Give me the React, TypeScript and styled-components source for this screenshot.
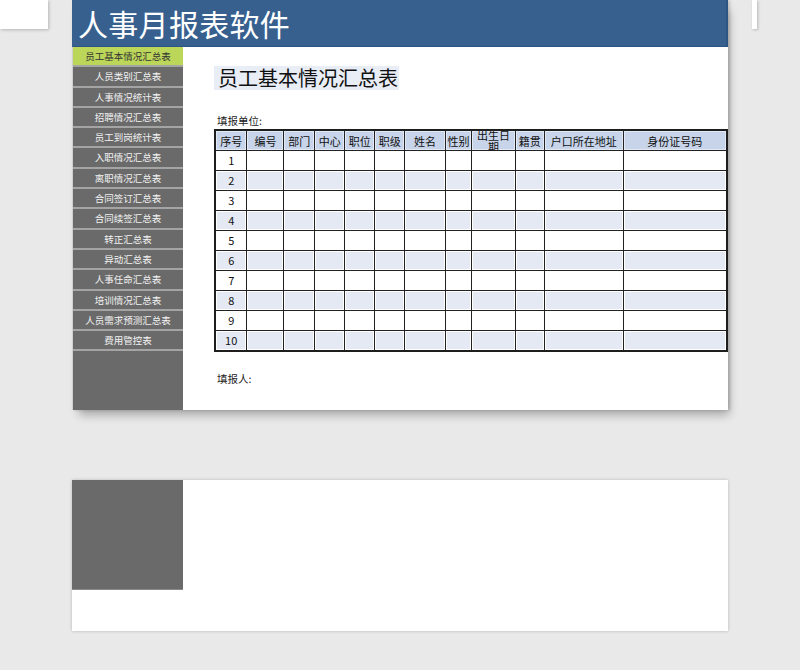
import React from 'react';
import styled, { createGlobalStyle } from 'styled-components';

const GlobalStyle = createGlobalStyle`
    html, body {
        margin: 0;
        padding: 0;
        background: #e9e9e9;
        font-family: 'Noto Sans CJK SC', 'Noto Sans', sans-serif;
    }
`;

const menuItems = [
    '员工基本情况汇总表',
    '人员类别汇总表',
    '人事情况统计表',
    '招聘情况汇总表',
    '员工到岗统计表',
    '入职情况汇总表',
    '离职情况汇总表',
    '合同签订汇总表',
    '合同续签汇总表',
    '转正汇总表',
    '异动汇总表',
    '人事任命汇总表',
    '培训情况汇总表',
    '人员需求预测汇总表',
    '费用管控表',
];

// widths taken from the sheet's column grid
const columns = [
    { label: '序号', width: 32 },
    { label: '编号', width: 37 },
    { label: '部门', width: 31 },
    { label: '中心', width: 30 },
    { label: '职位', width: 30 },
    { label: '职级', width: 30 },
    { label: '姓名', width: 41 },
    { label: '性别', width: 26 },
    { label: '出生日期', width: 44, wrap: true },
    { label: '籍贯', width: 29 },
    { label: '户口所在地址', width: 79 },
    { label: '身份证号码', width: 104 },
];

const Stage = styled.div`
    width: 800px;
    height: 670px;
    overflow: hidden;
`;

const SheetRow = styled.div`
    display: flex;
    align-items: flex-start;
    gap: 24px;
`;

const Stub = styled.div<{ $w: number }>`
    width: ${(p) => p.$w}px;
    height: 29px;
    background: #fff;
    box-shadow: 1px 1px 3px rgba(0, 0, 0, 0.22);
`;

const MainSheet = styled.div`
    width: 656px;
    height: 410px;
    background: #fff;
    display: flex;
    flex-direction: column;
    box-shadow: 2px 0 3px rgba(0, 0, 0, 0.18), 4px 8px 9px -3px rgba(0, 0, 0, 0.28);
`;

const TitleBar = styled.div`
    box-sizing: border-box;
    height: 47px;
    background: #37608f;
    border-bottom: 1px solid #2c5485;
    border-right: 2px solid #2c5485;
    padding: 2px 0 0 6px;
    color: #fff;
    font-size: 30px;
    line-height: 42px;
    letter-spacing: 0.3px;
`;

const Body = styled.div`
    flex: 1;
    display: flex;
    min-height: 0;
`;

const Sidebar = styled.div`
    width: 111px;
    background: #6a6a6a;
    display: flex;
    flex-direction: column;
    border-left: 1px solid #cfcfcf;
    box-sizing: border-box;
`;

const MenuItem = styled.div<{ $active?: boolean }>`
    height: 18.3px;
    flex-shrink: 0;
    border-bottom: 2px solid #a4a4a4;
    background: ${(p) => (p.$active ? '#bcd65a' : '#6a6a6a')};
    color: ${(p) => (p.$active ? '#333' : '#f2f2f2')};
    font-size: 9.5px;
    line-height: 19px;
    text-align: center;
    white-space: nowrap;
`;

const Content = styled.div`
    flex: 1;
    padding: 19px 0 0 31px;
    display: flex;
    flex-direction: column;
    align-items: flex-start;
`;

const SheetTitle = styled.div`
    background: #e9edf5;
    font-size: 20px;
    line-height: 24px;
    height: 24px;
    padding: 0 1px 0 4px;
    color: #111;
`;

const Label = styled.div<{ $top: number }>`
    margin-top: ${(p) => p.$top}px;
    margin-left: 3px;
    font-size: 10.5px;
    line-height: 13px;
    color: #222;
`;

const Grid = styled.table`
    margin-top: 2px;
    border-collapse: collapse;
    border: 2px solid #1e1e1e;
    table-layout: fixed;
`;

const HeadCell = styled.th`
    padding: 0;
    height: 19px;
    border: 1px solid #222;
    background: #c7d4ea;
    box-shadow: inset 0 0 0 1px #e3e9f4;
    font-weight: normal;
    font-size: 11px;
    color: #111;
`;

const HeadInner = styled.div<{ $wrap?: boolean }>`
    height: 19px;
    padding: 0 ${(p) => (p.$wrap ? 4 : 0)}px;
    overflow: hidden;
    display: flex;
    align-items: center;
    justify-content: center;
    line-height: 12px;
    text-align: center;
    white-space: ${(p) => (p.$wrap ? 'normal' : 'nowrap')};
`;

const Cell = styled.td<{ $shade: boolean }>`
    padding: 0;
    height: 19px;
    border: 1px solid #222;
    background: ${(p) => (p.$shade ? '#e4e9f4' : '#fff')};
    box-shadow: inset 0 0 0 1px #fff;
    font-size: 11px;
    text-align: center;
    color: #111;
    line-height: 19px;
`;

const LowerSheet = styled.div`
    margin: 70px 0 0 72px;
    width: 656px;
    height: 151px;
    background: #fff;
    box-shadow: 0 0 3px rgba(0, 0, 0, 0.22);
`;

const LowerSide = styled.div`
    width: 111px;
    height: 110px;
    background: #6a6a6a;
    border-bottom: 1px solid #8a8a8a;
    box-sizing: border-box;
`;

export default function App() {
    const rows = Array.from({ length: 10 }, (_, i) => i + 1);
    return (
        <Stage>
            <GlobalStyle />
            <SheetRow>
                <Stub $w={48} />
                <MainSheet>
                    <TitleBar>人事月报表软件</TitleBar>
                    <Body>
                        <Sidebar>
                            {menuItems.map((m, i) => (
                                <MenuItem key={m} $active={i === 0}>
                                    {m}
                                </MenuItem>
                            ))}
                        </Sidebar>
                        <Content>
                            <SheetTitle>员工基本情况汇总表</SheetTitle>
                            <Label $top={24}>填报单位:</Label>
                            <Grid>
                                <colgroup>
                                    {columns.map((c) => (
                                        <col key={c.label} style={{ width: c.width }} />
                                    ))}
                                </colgroup>
                                <thead>
                                    <tr>
                                        {columns.map((c) => (
                                            <HeadCell key={c.label}>
                                                <HeadInner $wrap={c.wrap}>{c.label}</HeadInner>
                                            </HeadCell>
                                        ))}
                                    </tr>
                                </thead>
                                <tbody>
                                    {rows.map((r) => (
                                        <tr key={r}>
                                            {columns.map((c, ci) => (
                                                <Cell key={c.label} $shade={r % 2 === 0}>
                                                    {ci === 0 ? r : ''}
                                                </Cell>
                                            ))}
                                        </tr>
                                    ))}
                                </tbody>
                            </Grid>
                            <Label $top={20}>填报人:</Label>
                        </Content>
                    </Body>
                </MainSheet>
                <Stub $w={5} />
            </SheetRow>
            <LowerSheet>
                <LowerSide />
            </LowerSheet>
        </Stage>
    );
}
